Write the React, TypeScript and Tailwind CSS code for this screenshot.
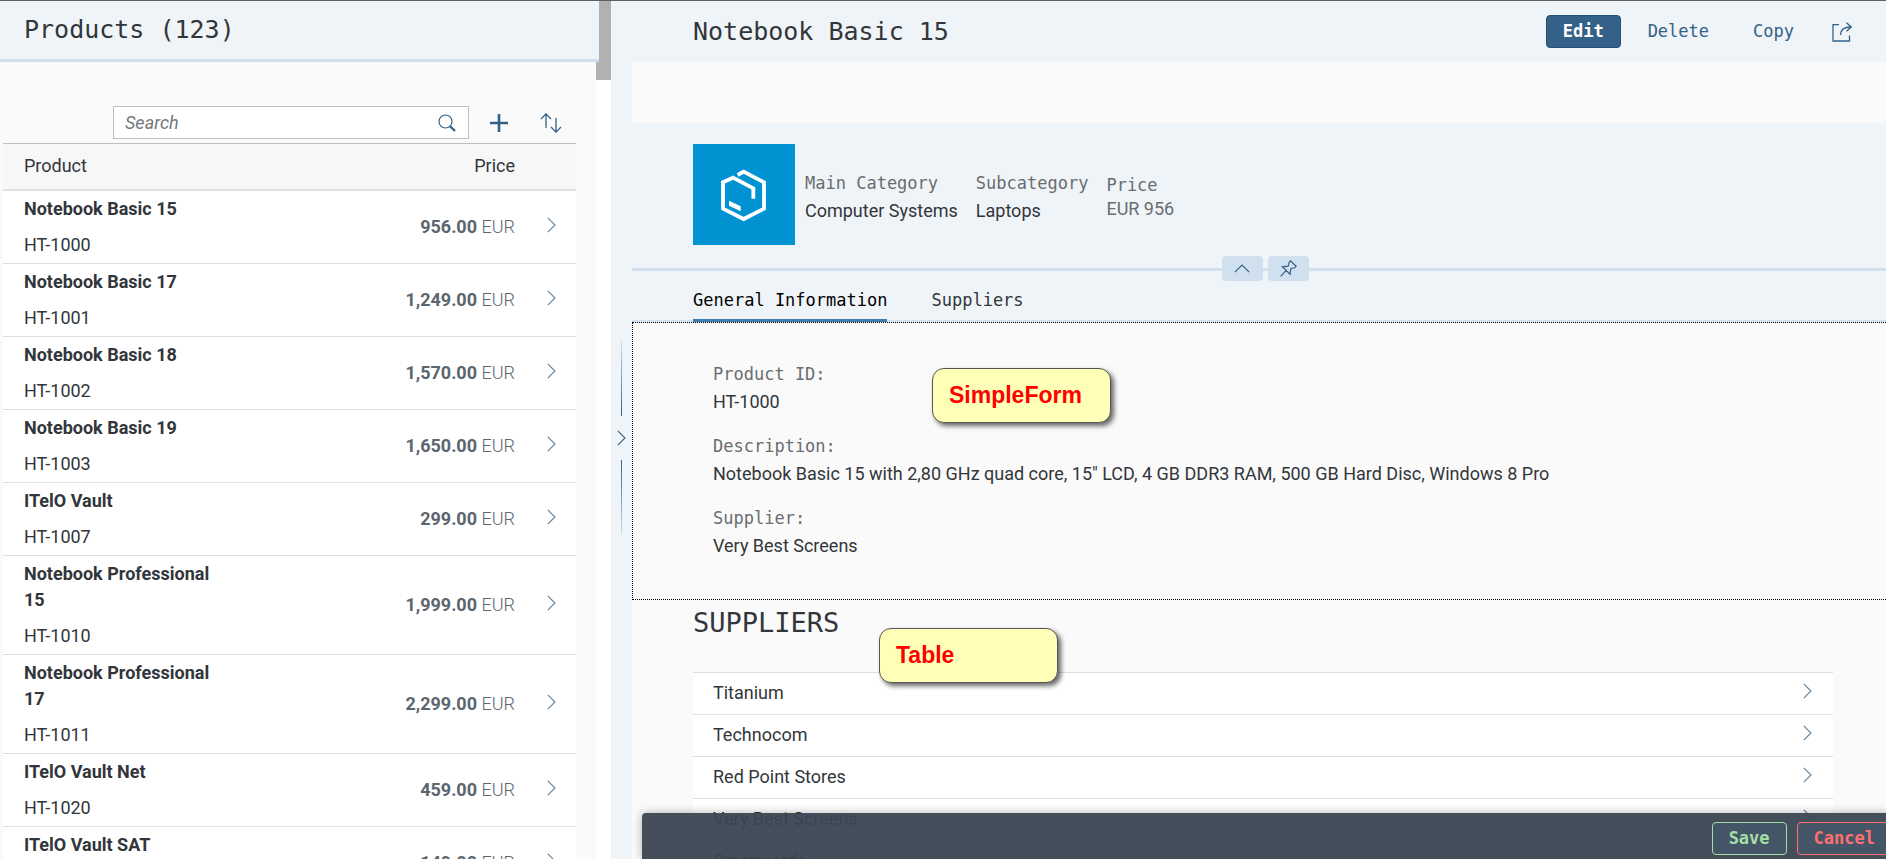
import React from "react";

const products = [
  { name: "Notebook Basic 15", id: "HT-1000", price: "956.00" },
  { name: "Notebook Basic 17", id: "HT-1001", price: "1,249.00" },
  { name: "Notebook Basic 18", id: "HT-1002", price: "1,570.00" },
  { name: "Notebook Basic 19", id: "HT-1003", price: "1,650.00" },
  { name: "ITelO Vault", id: "HT-1007", price: "299.00" },
  { name: "Notebook Professional 15", id: "HT-1010", price: "1,999.00" },
  { name: "Notebook Professional 17", id: "HT-1011", price: "2,299.00" },
  { name: "ITelO Vault Net", id: "HT-1020", price: "459.00" },
  { name: "ITelO Vault SAT", id: "HT-1021", price: "149.00" },
];

const suppliers = ["Titanium", "Technocom", "Red Point Stores", "Very Best Screens", "Smartcards"];

const fields = [
  { label: "Product ID:", value: "HT-1000" },
  { label: "Description:", value: 'Notebook Basic 15 with 2,80 GHz quad core, 15" LCD, 4 GB DDR3 RAM, 500 GB Hard Disc, Windows 8 Pro' },
  { label: "Supplier:", value: "Very Best Screens" },
];

const ChevronRight = ({ className = "" }) => (
  <svg className={className} width="9" height="16" viewBox="0 0 9 16" fill="none" stroke="currentColor" strokeWidth="1.1">
    <path d="M0.8 0.8 L8 8 L0.8 15.2" />
  </svg>
);

const Logo = () => (
  <svg className="h-[101px] w-[102px] bg-[#0092d1]" viewBox="0 0 306 303" fill="none">
    <path
      d="M134 93 L152 83 L213 115 L213 194 L152 225 L90 194 L90 115 L120 101 L181 133 L181 164"
      stroke="#fff"
      strokeWidth="11.5"
    />
    <path d="M108 170 L143 187 L143 202 L108 185 Z" fill="#fff" />
  </svg>
);

const Callout = ({ text, className }: { text: string; className: string }) => (
  <div
    className={`absolute z-10 flex h-[55px] w-[179px] items-center rounded-xl border border-[#555] bg-[#ffffb8] px-4 font-['Liberation_Sans',sans-serif] text-[23px] font-bold text-[#ff0000] shadow-[3px_3px_5px_rgba(0,0,0,0.6)] ${className}`}
  >
    {text}
  </div>
);

const ProductList = () => {
  return (
    <aside className="flex w-[611px] shrink-0 flex-col bg-[#fafafa]">
      <div className="flex">
        <header className="flex h-[61px] w-[599px] items-center border-b-3 border-[#d1e0ee] bg-[#eff4f9] px-6">
          <h1 className="font-['DejaVu_Sans_Mono',monospace] text-[25px]">Products (123)</h1>
        </header>
        <div className="w-3 bg-[#b1b1b1]"></div>
      </div>

      <div className="flex min-h-0 flex-1">
        <div className="flex-1 pt-11 pr-5 pl-[3px]">
          <div className="flex h-[37px] items-start justify-end pr-1">
            <div className="flex h-[33px] w-[356px] items-center border border-[#bfbfbf] bg-white">
              <input
                type="text"
                aria-label="Search"
                placeholder="Search"
                className="min-w-0 flex-1 bg-transparent pl-[11px] text-[18px] placeholder:italic placeholder:text-[#74777a] outline-none"
              />
              <button aria-label="Start search" className="px-3 text-[#346187]">
                <svg width="18" height="18" viewBox="0 0 18 18" fill="none" stroke="currentColor">
                  <circle cx="7.5" cy="7.5" r="6.5" strokeWidth="1.2" />
                  <path d="M11.8 12 L17 17" strokeWidth="2.4" />
                </svg>
              </button>
            </div>
            <button aria-label="Add product" className="flex h-[33px] w-[60px] items-center justify-center text-[#346187]">
              <svg width="18" height="18" viewBox="0 0 18 18" fill="none" stroke="currentColor" strokeWidth="2.6">
                <path d="M0 9 H18 M9 0 V18" />
              </svg>
            </button>
            <button aria-label="Sort" className="flex h-[33px] w-[43px] items-center justify-center text-[#346187]">
              <svg width="22" height="20" viewBox="0 0 22 20" fill="none" stroke="currentColor" strokeWidth="1.3">
                <path d="M6 15 V1 M1 6 L6 0.9 L11 6 M16 5 V19 M11 14 L16 19.1 L21 14" />
              </svg>
            </button>
          </div>

          <table className="w-full border-collapse text-[18px] leading-[26px]">
            <thead>
              <tr className="h-[46px] border-t border-b-2 border-t-[#bfbfbf] border-b-[#e0e0e0] bg-[#f7f7f7]">
                <th className="pl-[21px] text-left font-normal">Product</th>
                <th className="w-[160px] text-right font-normal">Price</th>
                <th className="w-[61px]"></th>
              </tr>
            </thead>
            <tbody>
              {products.map((p) => (
                <tr key={p.id} className="border-b border-[#e0e0e0] bg-white">
                  <td className="py-[5px] pl-[21px]">
                    <p className="max-w-[200px] font-bold">{p.name}</p>
                    <p className="pt-2.5">{p.id}</p>
                  </td>
                  <td className="text-right text-[#5b6670]">
                    <span className="font-bold">{p.price}</span> <span className="font-light">EUR</span>
                  </td>
                  <td className="text-[#60809c]">
                    <ChevronRight className="mb-1 ml-8" />
                  </td>
                </tr>
              ))}
            </tbody>
          </table>
        </div>
        <div className="w-[15px] shrink-0 bg-white">
          <div className="h-[18px] bg-[#b1b1b1]"></div>
        </div>
      </div>
    </aside>
  );
};

const Resizer = () => {
  return (
    <div className="flex w-[21px] shrink-0 flex-col items-center justify-center gap-3.5 bg-[#eff4f9] pt-4 text-[#346187]">
      <div className="h-[75px] w-px bg-linear-to-t from-[#346187] to-[#d1e0ee]"></div>
      <ChevronRight />
      <div className="h-[75px] w-px bg-linear-to-b from-[#346187] to-[#d1e0ee]"></div>
    </div>
  );
};

const Detail = () => {
  return (
    <main className="relative flex min-w-0 flex-1 flex-col bg-[#fafafa]">
      <header className="flex h-[61px] shrink-0 items-center justify-between bg-[#eff4f9] pr-[23px] pl-[61px] font-['DejaVu_Sans_Mono',monospace]">
        <h2 className="text-[25px]">Notebook Basic 15</h2>
        <div className="flex items-center gap-2.5 text-[17px] text-[#346187]">
          <button className="h-[33px] rounded border border-[#245074] bg-[#346187] px-4 font-bold text-white">Edit</button>
          <button className="h-[33px] rounded border border-transparent px-4">Delete</button>
          <button className="h-[33px] rounded border border-transparent px-4">Copy</button>
          <button aria-label="Share" className="flex h-[33px] w-[42px] items-center justify-center">
            <svg width="20" height="20" viewBox="0 0 20 20" fill="none" stroke="currentColor" strokeWidth="1.3">
              <path d="M7 2.7 H1 V19 H17.5 V13.5 M8.5 13 C8.5 7.5 12 5 19 5 M14.5 0.8 L19.2 5 L14.5 9.2" />
            </svg>
          </button>
        </div>
      </header>

      <div className="h-[61px] shrink-0"></div>

      <section className="relative flex h-[148px] shrink-0 items-start border-b-3 border-[#d1e0ee] bg-[#eff4f9] pt-[21px] pl-[61px] text-[18px]">
        <Logo />
        <dl className="ml-2.5 flex gap-[18px] pt-[25px]">
          <div>
            <dt className="font-['DejaVu_Sans_Mono',monospace] text-[17px] leading-7 text-[#6a6d70]">Main Category</dt>
            <dd className="leading-7">Computer Systems</dd>
          </div>
          <div>
            <dt className="font-['DejaVu_Sans_Mono',monospace] text-[17px] leading-7 text-[#6a6d70]">Subcategory</dt>
            <dd className="leading-7">Laptops</dd>
          </div>
          <div className="pt-1 text-[#6a6d70]">
            <dt className="font-['DejaVu_Sans_Mono',monospace] text-[17px] leading-6">Price</dt>
            <dd className="leading-6">EUR 956</dd>
          </div>
        </dl>

        {/* buttons sitting on the header border */}
        <div className="absolute inset-x-0 -bottom-[13px] flex justify-center gap-[5px] pl-3 text-[#346187]">
          <button aria-label="Collapse header" className="flex h-[25px] w-[41px] items-center justify-center rounded bg-[#d1e0ee]">
            <svg width="16" height="9" viewBox="0 0 16 9" fill="none" stroke="currentColor" strokeWidth="1.2">
              <path d="M0.8 8.2 L8 1 L15.2 8.2" />
            </svg>
          </button>
          <button aria-label="Pin header" className="flex h-[25px] w-[41px] items-center justify-center rounded bg-[#d1e0ee]">
            <svg width="17" height="17" viewBox="0 0 17 17" fill="none" stroke="currentColor" strokeWidth="1.2">
              <path d="M0.6 16.4 L6.2 10.4 M10.4 0.8 L16.2 6.2 L14.6 7.8 L11 8.4 L10 14.2 L2.4 6.8 L8.2 6.2 L9.2 2.2 Z" />
            </svg>
          </button>
        </div>
      </section>

      <nav className="flex h-[51px] shrink-0 items-end gap-11 border-b-2 border-[#d1e0ee] bg-[#eff4f9] pl-[61px] font-['DejaVu_Sans_Mono',monospace] text-[17px] leading-[30px]">
        <a href="#general" className="-mb-0.5 h-[37px] border-b-3 border-[#427cac] text-black">
          General Information
        </a>
        <a href="#suppliers" className="-mb-0.5 h-[37px]">
          Suppliers
        </a>
      </nav>

      <section id="general" className="relative h-[278px] shrink-0 border border-r-0 border-dotted border-black pt-[37px] pl-20 text-[18px]">
        <dl className="flex flex-col gap-4">
          {fields.map((f) => (
            <div key={f.label}>
              <dt className="font-['DejaVu_Sans_Mono',monospace] text-[17px] leading-7 text-[#6a6d70]">{f.label}</dt>
              <dd className="leading-7">{f.value}</dd>
            </div>
          ))}
        </dl>
        <Callout text="SimpleForm" className="top-[45px] left-[299px]" />
      </section>

      <section id="suppliers" className="relative pr-[53px] pl-[61px]">
        <h3 className="h-[72px] pt-[7px] font-['DejaVu_Sans_Mono',monospace] text-[27px] leading-8">SUPPLIERS</h3>
        <Callout text="Table" className="top-7 left-[247px]" />
        <table className="w-full border-collapse border-t border-[#e0e0e0] bg-white text-[18px]">
          <tbody>
            {suppliers.map((s) => (
              <tr key={s} className="h-[42px] border-b border-[#e0e0e0]">
                <td className="pb-0.5 pl-5">{s}</td>
                <td className="w-[30px] text-[#60809c]">
                  <ChevronRight className="mb-1.5" />
                </td>
              </tr>
            ))}
          </tbody>
        </table>
      </section>

      <footer className="absolute -right-1.5 bottom-0 left-2.5 flex h-[46px] items-start justify-end gap-2.5 rounded-t bg-[#3a4652]/95 pt-[9px] font-['DejaVu_Sans_Mono',monospace] text-[17px] font-bold shadow-[0_0_10px_rgba(0,0,0,0.3)] [text-shadow:0_0_2px_rgba(0,0,0,0.6)]">
        <button className="h-[33px] rounded border border-[#a5dea5] bg-[#435566] px-4 text-[#a5dea5]">Save</button>
        <button className="h-[33px] rounded border border-[#ff7070] bg-[#435566] px-4 text-[#ff7070]">Cancel</button>
      </footer>
    </main>
  );
};

const App = () => {
  return (
    <div className="flex h-screen overflow-hidden border-t border-[#5f5f63] font-['Roboto',sans-serif] text-[#32363a]">
      <ProductList />
      <Resizer />
      <Detail />
    </div>
  );
};

export default App;
